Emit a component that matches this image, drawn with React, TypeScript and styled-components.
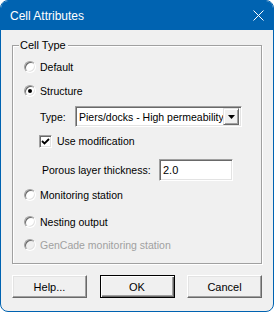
import * as React from 'react';
import styled, { createGlobalStyle } from 'styled-components';

const GlobalStyle = createGlobalStyle`
  html, body {
    margin: 0;
    padding: 0;
    background: #ffffff;
  }
  body {
    font-family: "Liberation Sans", Arial, sans-serif;
  }
`;

const Window = styled.div`
  box-sizing: border-box;
  width: 274px;
  height: 312px;
  border: 1px solid #0063b1;
  border-radius: 8px;
  overflow: hidden;
  background: #f0f0f0;
  display: flex;
  flex-direction: column;
  font-family: "Liberation Sans", Arial, sans-serif;
  font-size: 10.5px;
  color: #000;
`;

const TitleBar = styled.div`
  height: 29px;
  flex: none;
  background: #0063b1;
  color: #fff;
  display: flex;
  align-items: center;
  justify-content: space-between;
  padding: 0 9px 0 9px;
  font-size: 12px;
`;

const Body = styled.div`
  display: flex;
  flex-direction: column;
  padding: 0 11px;
`;

const GroupBox = styled.div`
  margin-top: 15px;
  height: 219px;
  box-sizing: border-box;
  border: 1px solid #a0a0a0;
  box-shadow: inset 1px 1px 0 #fff, 1px 1px 0 #fff;
  display: flex;
  flex-direction: column;
`;

const Legend = styled.span`
  align-self: flex-start;
  height: 14px;
  line-height: 14px;
  margin: -8px 0 0 6px;
  padding: 0 2px 0 1px;
  background: #f0f0f0;
  font-size: 11px;
`;

const Row = styled.div<{ $top: number; $indent: number; $h?: number }>`
  display: flex;
  align-items: center;
  height: ${(p) => p.$h ?? 20}px;
  margin-top: ${(p) => p.$top}px;
  padding-left: ${(p) => p.$indent}px;
`;

const RadioCircle = styled.span<{ $disabled?: boolean }>`
  box-sizing: border-box;
  width: 12px;
  height: 12px;
  flex: none;
  border-radius: 50%;
  border: 1px solid;
  border-color: #a0a0a0 #ffffff #ffffff #a0a0a0;
  background: ${(p) => (p.$disabled ? '#f0f0f0' : '#ffffff')};
  box-shadow: inset 1px 1px 0 #696969, inset -1px -1px 0 #e3e3e3;
  display: flex;
  align-items: center;
  justify-content: center;
`;

const Dot = styled.span`
  width: 4px;
  height: 4px;
  border-radius: 50%;
  background: #000;
`;

const Text = styled.span<{ $gap: number; $disabled?: boolean }>`
  margin-left: ${(p) => p.$gap}px;
  color: ${(p) => (p.$disabled ? '#a0a0a0' : '#000')};
  white-space: nowrap;
`;

const Label = styled.span<{ $w: number }>`
  width: ${(p) => p.$w}px;
  flex: none;
  white-space: nowrap;
`;

const Sunken = styled.div<{ $w: number; $h: number }>`
  box-sizing: border-box;
  width: ${(p) => p.$w}px;
  height: ${(p) => p.$h}px;
  flex: none;
  border: 1px solid;
  border-color: #a0a0a0 #ffffff #ffffff #a0a0a0;
  box-shadow: inset 1px 1px 0 #696969, inset -1px -1px 0 #e3e3e3;
  background: #fff;
  display: flex;
  align-items: center;
  padding: 2px 2px 2px 3px;
  overflow: hidden;
`;

const ComboText = styled.span`
  flex: 1;
  min-width: 0;
  overflow: hidden;
  white-space: nowrap;
  font-size: 10.5px;
`;

const DropButton = styled.span`
  box-sizing: border-box;
  width: 16px;
  height: 17px;
  flex: none;
  background: #f0f0f0;
  border: 1px solid;
  border-color: #e3e3e3 #696969 #696969 #e3e3e3;
  box-shadow: inset 1px 1px 0 #fff, inset -1px -1px 0 #a0a0a0;
  display: flex;
  align-items: center;
  justify-content: center;
`;

const CheckBox = styled.span`
  box-sizing: border-box;
  width: 13px;
  height: 13px;
  flex: none;
  border: 1px solid;
  border-color: #a0a0a0 #ffffff #ffffff #a0a0a0;
  box-shadow: inset 1px 1px 0 #696969, inset -1px -1px 0 #e3e3e3;
  background: #fff;
  display: flex;
  align-items: center;
  justify-content: center;
`;

const InputText = styled.span`
  font-size: 11px;
`;

const ButtonRow = styled.div`
  display: flex;
  justify-content: space-between;
  margin-top: 11px;
`;

const Button = styled.div<{ $default?: boolean }>`
  box-sizing: border-box;
  width: 75px;
  height: 23px;
  display: flex;
  align-items: center;
  justify-content: center;
  background: #f0f0f0;
  border: 1px solid;
  border-color: ${(p) => (p.$default ? '#000 #000 #000 #000' : '#ffffff #696969 #696969 #ffffff')};
  box-shadow: ${(p) =>
    p.$default
      ? 'inset 1px 1px 0 #fff, inset -1px -1px 0 #696969, inset -2px -2px 0 #a0a0a0'
      : 'inset -1px -1px 0 #a0a0a0, inset 1px 1px 0 #e3e3e3'};
  font-size: 11px;
`;

const CloseIcon = () => (
  <svg width="11" height="11" viewBox="0 0 11 11">
    <path d="M0.5 0.5 L10.5 10.5 M10.5 0.5 L0.5 10.5" stroke="#fff" strokeWidth="1" />
  </svg>
);

const Radio = ({ label, checked, disabled, top }: { label: string; checked?: boolean; disabled?: boolean; top: number }) => (
  <Row $top={top} $indent={11}>
    <RadioCircle $disabled={disabled}>{checked && <Dot />}</RadioCircle>
    <Text $gap={4} $disabled={disabled}>{label}</Text>
  </Row>
);

export default function App() {
  return (
    <>
      <GlobalStyle />
      <Window>
        <TitleBar>
          <span>Cell Attributes</span>
          <CloseIcon />
        </TitleBar>
        <Body>
          <GroupBox>
            <Legend>Cell Type</Legend>
            <Radio label="Default" top={5} />
            <Radio label="Structure" checked top={4} />
            <Row $top={5} $indent={27} $h={21}>
              <Label $w={35}>Type:</Label>
              <Sunken $w={167} $h={21}>
                <ComboText>Piers/docks - High permeability</ComboText>
                <DropButton>
                  <svg width="7" height="4" viewBox="0 0 7 4">
                    <path d="M0 0 H7 L3.5 4 Z" fill="#000" />
                  </svg>
                </DropButton>
              </Sunken>
            </Row>
            <Row $top={4} $indent={26}>
              <CheckBox>
                <svg width="9" height="9" viewBox="0 0 9 9">
                  <path d="M1 4 L3.5 6.5 L8 2" stroke="#000" strokeWidth="1.8" fill="none" />
                </svg>
              </CheckBox>
              <Text $gap={5}>Use modification</Text>
            </Row>
            <Row $top={8} $indent={29} $h={22}>
              <Label $w={117}>Porous layer thickness:</Label>
              <Sunken $w={74} $h={22}>
                <InputText>2.0</InputText>
              </Sunken>
            </Row>
            <Radio label="Monitoring station" top={4} />
            <Radio label="Nesting output" top={7} />
            <Radio label="GenCade monitoring station" disabled top={3} />
          </GroupBox>
          <ButtonRow>
            <Button>Help...</Button>
            <Button $default>OK</Button>
            <Button>Cancel</Button>
          </ButtonRow>
        </Body>
      </Window>
    </>
  );
}
